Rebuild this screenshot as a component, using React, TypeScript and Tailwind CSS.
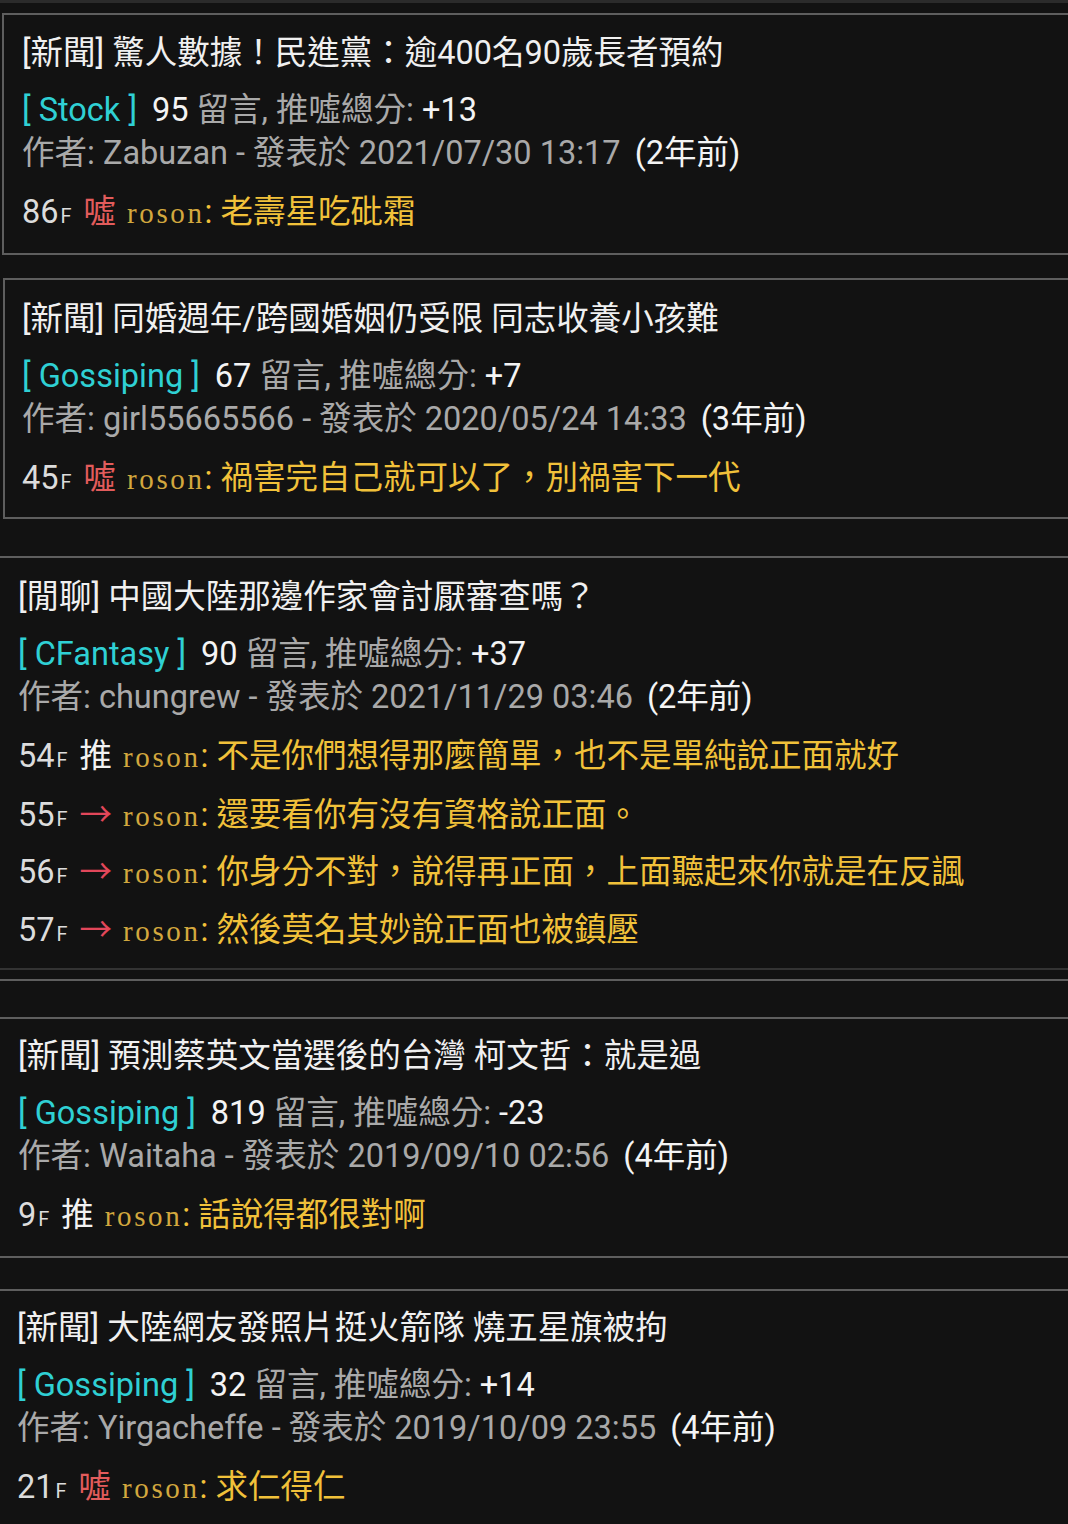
type Tag = "推" | "噓" | "→";

interface Comment {
  floor: number;
  tag: Tag;
  text: string;
}

interface Post {
  title: string;
  board: string;
  count: number;
  score: string;
  author: string;
  date: string;
  ago: string;
  comments: Comment[];
  box: string;
}

const posts: Post[] = [
  {
    title: "[新聞] 驚人數據！民進黨：逾400名90歲長者預約",
    board: "Stock",
    count: 95,
    score: "+13",
    author: "Zabuzan",
    date: "2021/07/30 13:17",
    ago: "(2年前)",
    comments: [{ floor: 86, tag: "噓", text: "老壽星吃砒霜" }],
    box: "mt-[10px] ml-[2px] border-l-2 border-t-2 border-b-2 border-[#5e5e5e] pl-[18px] pt-[17px] pb-[19px]",
  },
  {
    title: "[新聞] 同婚週年/跨國婚姻仍受限 同志收養小孩難",
    board: "Gossiping",
    count: 67,
    score: "+7",
    author: "girl55665566",
    date: "2020/05/24 14:33",
    ago: "(3年前)",
    comments: [{ floor: 45, tag: "噓", text: "禍害完自己就可以了，別禍害下一代" }],
    box: "mt-[23px] ml-[3px] border-l-2 border-t-2 border-b-2 border-[#5e5e5e] pl-[17px] pt-[18px] pb-[17px]",
  },
  {
    title: "[閒聊] 中國大陸那邊作家會討厭審查嗎？",
    board: "CFantasy",
    count: 90,
    score: "+37",
    author: "chungrew",
    date: "2021/11/29 03:46",
    ago: "(2年前)",
    comments: [
      { floor: 54, tag: "推", text: "不是你們想得那麼簡單，也不是單純說正面就好" },
      { floor: 55, tag: "→", text: "還要看你有沒有資格說正面。" },
      { floor: 56, tag: "→", text: "你身分不對，說得再正面，上面聽起來你就是在反諷" },
      { floor: 57, tag: "→", text: "然後莫名其妙說正面也被鎮壓" },
    ],
    box: "mt-[37px] border-t-2 border-b-2 border-t-[#5e5e5e] border-b-[#333333] pl-[18px] pt-[18px] pb-[17px]",
  },
  {
    title: "[新聞] 預測蔡英文當選後的台灣 柯文哲：就是過",
    board: "Gossiping",
    count: 819,
    score: "-23",
    author: "Waitaha",
    date: "2019/09/10 02:56",
    ago: "(4年前)",
    comments: [{ floor: 9, tag: "推", text: "話說得都很對啊" }],
    box: "mt-[36px] border-t-2 border-b-2 border-[#5e5e5e] pl-[18px] pt-[16px] pb-[19px]",
  },
  {
    title: "[新聞] 大陸網友發照片挺火箭隊 燒五星旗被拘",
    board: "Gossiping",
    count: 32,
    score: "+14",
    author: "Yirgacheffe",
    date: "2019/10/09 23:55",
    ago: "(4年前)",
    comments: [{ floor: 21, tag: "噓", text: "求仁得仁" }],
    box: "mt-[31px] border-t-2 border-[#5e5e5e] pl-[17px] pt-[16px] pb-[16px]",
  },
];

const tagColor: Record<Tag, string> = {
  推: "text-[#f2f2f2]",
  噓: "text-[#e25c5c]",
  "→": "text-[#e2475a]",
};

function CommentRow({ c }: { c: Comment }) {
  return (
    <div className="flex h-[43px] items-baseline leading-[43px] whitespace-nowrap">
      <span className="text-[#dcdcdc]">{c.floor}</span>
      <span className="ml-[2px] text-[20px] text-[#dcdcdc]">F</span>
      <span className={`ml-[12px] ${tagColor[c.tag]}`}>
        {c.tag === "→" ? (
          <span className="inline-block w-[32.5px] font-['Noto_Sans_CJK_TC',sans-serif] leading-[37px]">→</span>
        ) : (
          c.tag
        )}
      </span>
      <span className="ml-[11px] font-['Liberation_Serif',serif] text-[29px] tracking-[2.6px] text-[#d3a83e]">
        roson
      </span>
      <span className="text-[#f1c13a]">: {c.text}</span>
    </div>
  );
}

function PostCard({ p }: { p: Post }) {
  return (
    <div className={p.box}>
      <div className="h-[43px] leading-[43px] text-[#f0f0f0] whitespace-nowrap">{p.title}</div>
      <div className="mt-[14px] h-[43px] leading-[43px] whitespace-nowrap">
        <span className="text-[#2fd0d4]">[ {p.board} ]</span>
        <span className="ml-[15px] text-[#f4f4f4]">{p.count}</span>{" "}
        <span className="text-[#a9a9a9]">留言, 推噓總分:</span>{" "}
        <span className="text-[#f4f4f4]">{p.score}</span>
      </div>
      <div className="h-[43px] leading-[43px] whitespace-nowrap">
        <span className="text-[#a9a9a9]">
          作者: {p.author} - 發表於 {p.date}
        </span>
        <span className="ml-[14px] text-[#f4f4f4]">{p.ago}</span>
      </div>
      <div className="mt-[16px] flex flex-col gap-[14.5px]">
        {p.comments.map((c) => (
          <CommentRow key={c.floor} c={c} />
        ))}
      </div>
    </div>
  );
}

export default function App() {
  return (
    <div
      lang="zh-TW"
      className="min-h-[1524px] overflow-hidden bg-[#121212] font-['Roboto','Noto_Sans_CJK_TC',sans-serif] text-[32.5px]"
    >
      <div className="h-[3px] bg-[#2b2b2b]" />
      {posts.map((p, i) => (
        <div key={i}>
          <PostCard p={p} />
          {i === 2 && <div className="mt-[9px] h-[2px] bg-[#5e5e5e]" />}
        </div>
      ))}
    </div>
  );
}
